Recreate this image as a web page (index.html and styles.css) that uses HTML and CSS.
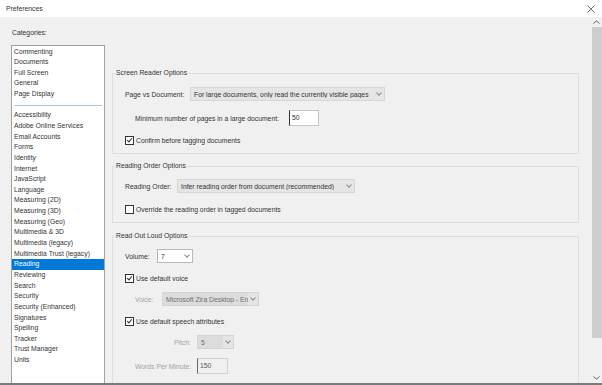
FILE: index.html
```html
<!DOCTYPE html>
<html>
<head>
  <title>Preferences</title>
  <meta charset="UTF-8">
  <link rel="stylesheet" href="styles.css">
</head>
<body>
  <div class="window">
    <header class="titlebar">
      <span class="title">Preferences</span>
      <svg class="close" width="8" height="8" viewBox="0 0 8 8"><path d="M0.5 0.5L7.5 7.5M7.5 0.5L0.5 7.5" stroke="#666" stroke-width="0.9" fill="none"/></svg>
    </header>

    <div class="body">
      <aside class="categories">
        <div class="cat-label">Categories:</div>
        <ul class="cat-list">
          <li>Commenting</li>
          <li>Documents</li>
          <li>Full Screen</li>
          <li>General</li>
          <li>Page Display</li>
          <li class="sep"></li>
          <li>Accessibility</li>
          <li>Adobe Online Services</li>
          <li>Email Accounts</li>
          <li>Forms</li>
          <li>Identity</li>
          <li>Internet</li>
          <li>JavaScript</li>
          <li>Language</li>
          <li>Measuring (2D)</li>
          <li>Measuring (3D)</li>
          <li>Measuring (Geo)</li>
          <li>Multimedia &amp; 3D</li>
          <li>Multimedia (legacy)</li>
          <li>Multimedia Trust (legacy)</li>
          <li class="selected">Reading</li>
          <li>Reviewing</li>
          <li>Search</li>
          <li>Security</li>
          <li>Security (Enhanced)</li>
          <li>Signatures</li>
          <li>Spelling</li>
          <li>Tracker</li>
          <li>Trust Manager</li>
          <li>Units</li>
        </ul>
      </aside>

      <main class="pane">
        <!-- Screen reader -->
        <fieldset class="group">
          <legend>Screen Reader Options</legend>
          <div class="row first">
            <span class="lbl w-page">Page vs Document:</span>
            <div class="select grey w-195"><span>For large documents, only read the currently visible pages</span><i class="chev"></i></div>
          </div>
          <div class="row indent">
            <span class="lbl w-min">Minimum number of pages in a large document:</span>
            <div class="input w-30">50</div>
          </div>
          <div class="row check-row">
            <span class="box checked"></span><span class="lbl">Confirm before tagging documents</span>
          </div>
        </fieldset>

        <!-- Reading order -->
        <fieldset class="group second">
          <legend>Reading Order Options</legend>
          <div class="row first">
            <span class="lbl w-order">Reading Order:</span>
            <div class="select grey w-178"><span>Infer reading order from document (recommended)</span><i class="chev"></i></div>
          </div>
          <div class="row check-row gap-11">
            <span class="box"></span><span class="lbl">Override the reading order in tagged documents</span>
          </div>
        </fieldset>

        <!-- Read out loud -->
        <fieldset class="group third">
          <legend>Read Out Loud Options</legend>
          <div class="row first">
            <span class="lbl w-vol">Volume:</span>
            <div class="select white w-36"><span>7</span><i class="chev"></i></div>
          </div>
          <div class="row check-row gap-10">
            <span class="box checked"></span><span class="lbl">Use default voice</span>
          </div>
          <div class="row indent">
            <span class="lbl off w-voice">Voice:</span>
            <div class="select off w-97"><span>Microsoft Zira Desktop - En</span><i class="chev"></i></div>
          </div>
          <div class="row check-row gap-10">
            <span class="box checked"></span><span class="lbl">Use default speech attributes</span>
          </div>
          <div class="row indent">
            <span class="lbl off w-attr">Pitch:</span>
            <div class="select off w-37"><span>5</span><i class="chev"></i></div>
          </div>
          <div class="row indent">
            <span class="lbl off w-attr">Words Per Minute:</span>
            <div class="input off w-31">150</div>
          </div>
          <div class="row check-row gap-8">
            <span class="box"></span>
          </div>
        </fieldset>
      </main>

      <div class="scrollbar">
        <div class="sb-btn"><svg width="7" height="4" viewBox="0 0 7 4"><path d="M0.5 3.5L3.5 0.8L6.5 3.5" stroke="#606060" stroke-width="1" fill="none"/></svg></div>
        <div class="sb-thumb"></div>
        <div class="sb-track"></div>
        <div class="sb-btn"><svg width="7" height="4" viewBox="0 0 7 4"><path d="M0.5 0.5L3.5 3.2L6.5 0.5" stroke="#606060" stroke-width="1" fill="none"/></svg></div>
      </div>
    </div>
  </div>
</body>
</html>
```

FILE: styles.css
```css
* {
  box-sizing: border-box;
}
body {
  margin: 0;
  font-family: "Liberation Sans", Arial, sans-serif;
  font-size: 6.8px;
  color: #333;
  background: #f0f0f0;
}
.window {
  width: 602px;
  height: 385px;
  display: flex;
  flex-direction: column;
  overflow: hidden;
  border-bottom: 2px solid #7a7a7a;
}
.titlebar {
  height: 17px;
  flex: none;
  background: #fff;
  display: flex;
  align-items: center;
  justify-content: space-between;
  padding: 0 7px 0 6px;
}
.close {
  display: block;
}
.body {
  flex: 1;
  min-height: 0;
  display: flex;
  background: #f0f0f0;
  overflow: hidden;
}

/* categories list */
.categories {
  flex: none;
  width: 105px;
  padding: 11px 0 0 11px;
}
.cat-label {
  height: 10px;
  line-height: 10px;
  margin-left: 1px;
  margin-bottom: 7px;
}
.cat-list {
  list-style: none;
  margin: 0;
  padding: 0.5px 0 0;
  width: 94px;
  height: 400px;
  background: #fff;
  border: 1px solid #a0a0a0;
}
.cat-list li {
  height: 10.65px;
  line-height: 10.65px;
  padding-left: 2px;
  white-space: nowrap;
}
.cat-list li.sep {
  position: relative;
}
.cat-list li.sep::after {
  content: "";
  position: absolute;
  left: 2px;
  right: 2px;
  top: 5px;
  border-top: 1px solid #9cc8ec;
}
.cat-list li.selected {
  background: #0078d7;
  color: #fff;
}

/* right pane */
.pane {
  flex: 1;
  min-width: 0;
  padding: 51px 12px 0 7px;
  overflow: hidden;
}
.group {
  margin: 0;
  min-width: 0;
  border: 1px solid #dedede;
  padding: 9px 12px 8px 12px;
}
.group.second {
  margin-top: 7px;
  padding-top: 8px;
}
.group.third {
  margin-top: 8px;
  padding-top: 8px;
}
.group legend {
  padding: 0 1px;
  margin-left: -10px;
  height: 10px;
  line-height: 10px;
}
.row {
  display: flex;
  align-items: center;
  margin-top: 9px;
  white-space: nowrap;
}
.row.first {
  margin-top: 0;
}
.row.indent {
  margin-left: 10px;
}
.row.gap-11 { margin-top: 11px; }
.row.gap-10 { margin-top: 10px; }
.row.gap-8 { margin-top: 8px; }

.lbl {
  flex: none;
}
.lbl.off {
  color: #a3a3a3;
}
.w-page { width: 65px; }
.w-min { width: 154px; }
.w-order { width: 52px; }
.w-vol { width: 32px; }
.w-voice { width: 27px; }
.w-attr { width: 56px; text-align: right; margin-right: 6px; }

/* checkbox */
.check-row {
  height: 10px;
}
.box {
  width: 9px;
  height: 9px;
  margin-right: 2px;
  border: 1px solid #333;
  background: #fff;
  flex: none;
  position: relative;
}
.box.checked::after {
  content: "";
  position: absolute;
  left: 2px;
  top: 0px;
  width: 2px;
  height: 4px;
  border-right: 1px solid #333;
  border-bottom: 1px solid #333;
  transform: rotate(40deg);
}

/* dropdowns */
.select {
  height: 14px;
  display: flex;
  align-items: center;
  padding-left: 3px;
  overflow: hidden;
  flex: none;
  border: 1px solid #d2d2d2;
}
.select span {
  flex: 1;
  min-width: 0;
  overflow: hidden;
}
.select .chev {
  flex: none;
  width: 10px;
  height: 12px;
  display: flex;
  align-items: center;
  justify-content: center;
}
.select .chev::before {
  content: "";
  width: 3px;
  height: 3px;
  margin-top: -2px;
  border-right: 1px solid #8a8a8a;
  border-bottom: 1px solid #8a8a8a;
  transform: rotate(45deg);
}
.select.grey {
  background: #e5e5e5;
  border-color: #d6d6d6;
}
.select.white {
  background: #fff;
  border-color: #b8b8b8;
}
.select.off {
  background: #dcdcdc;
  border-color: #d4d4d4;
  color: #6e6e6e;
}
.select.off .chev {
  background: #e4e4e4;
}
.w-195 { width: 195px; }
.w-178 { width: 178px; }
.w-36 { width: 36px; }
.w-97 { width: 97px; }
.w-37 { width: 37px; }

/* text inputs */
.input {
  height: 16px;
  line-height: 14px;
  padding-left: 2px;
  background: #fff;
  border: 1px solid #c6c6c6;
  border-left-color: #333;
  flex: none;
}
.input.off {
  background: #f0f0f0;
  border-color: #cfcfcf;
  border-left-color: #666;
  color: #555;
}
.w-30 { width: 30px; }
.w-31 { width: 31px; }

/* scrollbar */
.scrollbar {
  flex: none;
  width: 11px;
  display: flex;
  flex-direction: column;
  background: #f0f0f0;
}
.sb-btn {
  height: 10px;
  display: flex;
  align-items: center;
  justify-content: center;
}
.sb-thumb {
  height: 311px;
  margin-left: 1px;
  background: #cdcdcd;
}
.sb-track {
  flex: 1;
}
```
